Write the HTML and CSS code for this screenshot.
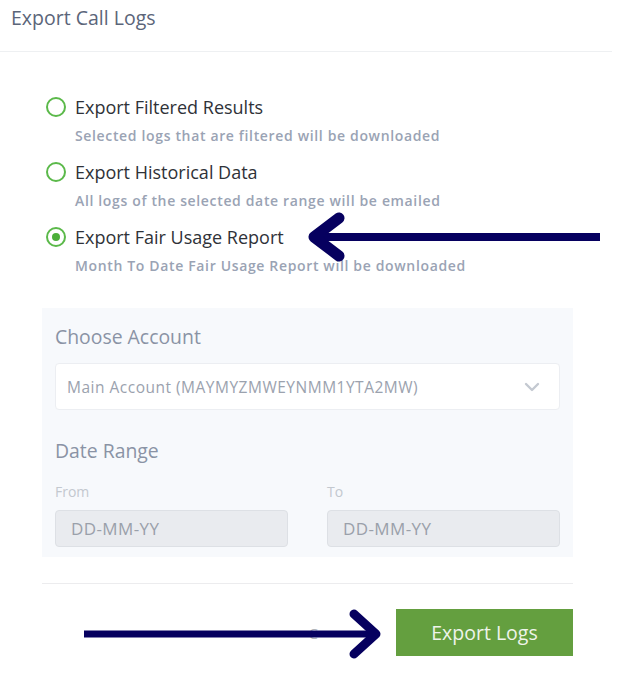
FILE: index.html
```html
<!DOCTYPE html>
<html>
<head>
<meta charset="utf-8">
<link rel="stylesheet" href="styles.css">
</head>
<body>
<div class="page">
  <header class="head">Export Call Logs</header>
  <main class="content">
    <ul class="options">
      <li class="opt">
        <div class="opt-row"><span class="radio"></span><span class="opt-label">Export Filtered Results</span></div>
        <div class="opt-desc">Selected logs that are filtered will be downloaded</div>
      </li>
      <li class="opt">
        <div class="opt-row"><span class="radio"></span><span class="opt-label">Export Historical Data</span></div>
        <div class="opt-desc">All logs of the selected date range will be emailed</div>
      </li>
      <li class="opt">
        <div class="opt-row"><span class="radio checked"></span><span class="opt-label">Export Fair Usage Report</span></div>
        <div class="opt-desc">Month To Date Fair Usage Report will be downloaded</div>
      </li>
    </ul>
    <section class="panel">
      <div class="panel-title">Choose Account</div>
      <div class="select">
        <span>Main Account (MAYMYZMWEYNMM1YTA2MW)</span>
        <svg class="chev" width="16" height="10" viewBox="0 0 16 10"><path d="M2 2 L8 8 L14 2" fill="none" stroke="#c4c9d1" stroke-width="2.4" stroke-linecap="round" stroke-linejoin="round"/></svg>
      </div>
      <div class="panel-title dr">Date Range</div>
      <div class="dates">
        <div class="field">
          <div class="field-label">From</div>
          <div class="date-input">DD-MM-YY</div>
        </div>
        <div class="field">
          <div class="field-label">To</div>
          <div class="date-input">DD-MM-YY</div>
        </div>
      </div>
    </section>
    <footer class="foot">
      <span class="cancel">C</span>
      <button class="btn">Export Logs</button>
    </footer>
  </main>
  <svg class="annot" width="628" height="690" viewBox="0 0 628 690">
    <g stroke="#06005f" fill="none" stroke-linecap="round" stroke-linejoin="round">
      <line x1="318" y1="237" x2="600" y2="237" stroke-width="8" stroke-linecap="butt"/>
      <path d="M339 218 L314 237 L339 256" stroke-width="11"/>
      <line x1="84" y1="634" x2="370" y2="634" stroke-width="7" stroke-linecap="butt"/>
      <path d="M354 614 L376 634 L354 654" stroke-width="9"/>
    </g>
  </svg>
</div>
</body>
</html>
```
FILE: styles.css
```css
html, body { margin: 0; padding: 0; background: #fff; }
.page { position: relative; width: 628px; height: 690px; overflow: hidden; font-family: "Open Sans", "Lato", sans-serif; }
.head {
  height: 52px; box-sizing: border-box; padding: 4px 0 0 11px;
  font-size: 19.5px; color: #5b6579; border-bottom: 1px solid #eef0f2; width: 612px;
}
.content { padding: 43px 0 0 42px; width: 531px; }
.options { list-style: none; margin: 0; padding: 0 0 0 4px; }
.opt { height: 65px; }
.opt-row { display: flex; align-items: center; height: 24px; }
.radio {
  width: 16px; height: 16px; border: 2px solid #5bb94a; border-radius: 50%;
  box-sizing: content-box; margin-right: 9px; position: relative; flex: none;
}
.radio.checked::after {
  content: ""; position: absolute; left: 4px; top: 4px; width: 8px; height: 8px;
  border-radius: 50%; background: #4caf3a;
}
.opt-label { font-size: 18px; color: #2f3238; }
.opt-desc { font-size: 14px; color: #9aa3b4; padding: 7px 0 0 29px; font-weight: 600; letter-spacing: 0.65px; line-height: 19px; }
.panel {
  margin-top: 18px; background: #f7f9fc; padding: 16px 13px 11px 13px; height: 249px; box-sizing: border-box;
}
.panel-title { font-size: 19.4px; color: #8a93a5; line-height: 26px; }
.select {
  margin-top: 13px; height: 47px; background: #fff; border: 1px solid #eceef2; border-radius: 4px;
  box-sizing: border-box; display: flex; align-items: center; justify-content: space-between;
  padding: 0 19px 0 11px; font-size: 15.5px; letter-spacing: 0.5px; color: #9ba2ae;
}
.dr { margin-top: 28px; }
.dates { display: flex; gap: 39px; margin-top: 18px; }
.field { flex: 1; }
.field-label { font-size: 14px; color: #c3c8cf; height: 20px; line-height: 20px; }
.date-input {
  margin-top: 8px; height: 37px; box-sizing: border-box; background: #e9ebef; border: 1px solid #dde0e5;
  border-radius: 4px; padding: 0 0 0 15px; display: flex; align-items: center; font-size: 17px; letter-spacing: 0.4px; color: #9aa0aa;
}
.foot {
  margin-top: 26px; border-top: 1px solid #ececee; padding-top: 25px; display: flex; justify-content: flex-end;
  align-items: center; gap: 0;
}
.cancel { font-size: 15px; color: #b0b4ba; margin-right: 78px; }
.btn {
  width: 177px; height: 47px; background: #649f3f; border: none; color: #eef4ea; font-family: "Open Sans", sans-serif;
  font-size: 19.5px; padding: 0; border-radius: 0;
}
.annot { position: absolute; left: 0; top: 0; pointer-events: none; }
```
